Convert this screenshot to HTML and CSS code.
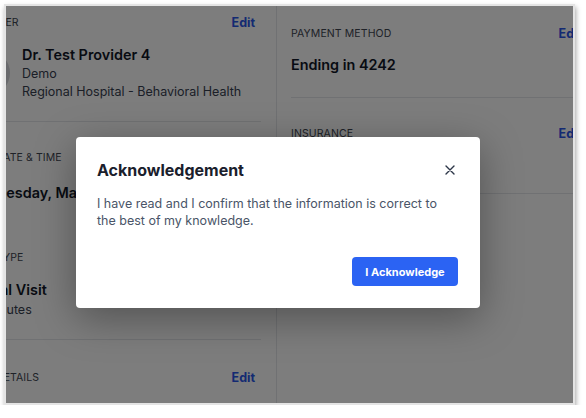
FILE: index.html
```html
<!DOCTYPE html>
<html lang="en">
<head>
<meta charset="utf-8">
<title>Acknowledgement</title>
<link rel="stylesheet" href="styles.css">
</head>
<body>
<div class="frame">
  <div class="page">
    <div class="col col-left">
      <section class="sec sec-provider">
        <div class="sec-head"><span class="label">Provider</span><a class="edit">Edit</a></div>
        <div class="provider">
          <div class="avatar"></div>
          <div class="provider-info">
            <div class="main">Dr. Test Provider 4</div>
            <div class="sub">Demo</div>
            <div class="sub">Regional Hospital - Behavioral Health</div>
          </div>
        </div>
      </section>
      <section class="sec sec-visit">
        <div class="sec-head"><span class="label">Visit Date &amp; Time</span></div>
        <div class="main date">Wednesday, May 15, 2024</div>
        <div class="sec-head type-head"><span class="label">Visit Type</span></div>
        <div class="main">Virtual Visit</div>
        <div class="sub duration">30 minutes</div>
      </section>
      <section class="sec sec-details">
        <div class="sec-head"><span class="label">Visit Details</span><a class="edit">Edit</a></div>
      </section>
    </div>
    <div class="col col-right">
      <section class="rsec rsec-pay">
        <div class="sec-head"><span class="label">Payment Method</span><a class="edit">Edit</a></div>
        <div class="main">Ending in 4242</div>
      </section>
      <section class="rsec rsec-ins">
        <div class="sec-head"><span class="label">Insurance</span><a class="edit">Edit</a></div>
        <div class="sub">Self pay</div>
      </section>
    </div>
  </div>
  <div class="overlay"></div>
  <div class="modal" role="dialog">
    <div class="modal-head">
      <h2 class="modal-title">Acknowledgement</h2>
      <button class="close" aria-label="Close">
        <svg width="10" height="10" viewBox="0 0 10 10"><path d="M1 1L9 9M9 1L1 9" stroke="#2d3748" stroke-width="1.4" stroke-linecap="round"/></svg>
      </button>
    </div>
    <p class="modal-body">I have read and I confirm that the information is correct to the best of my knowledge.</p>
    <div class="modal-foot"><button class="btn-primary">I Acknowledge</button></div>
  </div>
</div>
</body>
</html>
```

FILE: styles.css
```css
html, body {
  margin: 0;
  padding: 0;
  background: #ffffff;
}
body {
  font-family: Inter, "Noto Sans", sans-serif;
}
.frame {
  position: relative;
  margin: 4px 0 0 4px;
  width: 567px;
  height: 397px;
  border: 2px solid #e4e4e4;
  box-shadow: 1px 3px 5px rgba(0, 0, 0, 0.35);
  overflow: hidden;
  background: #ffffff;
}
.page {
  display: flex;
  height: 100%;
}
.col-left {
  flex: none;
  width: 311px;
  margin-left: -40px;
  border-right: 1px solid #e5e7eb;
  box-sizing: border-box;
  padding-right: 15px;
}
.col-right {
  flex: none;
  width: 297px;
  padding-left: 14px;
}
.sec-head {
  display: flex;
  justify-content: space-between;
  align-items: center;
  height: 16px;
}
.label {
  font-size: 10.5px;
  text-transform: uppercase;
  color: #3f4652;
  letter-spacing: 0.1px;
}
.edit {
  font-size: 12.5px;
  font-weight: 700;
  color: #2a56e8;
  margin-right: 6px;
}
.main {
  font-size: 14.4px;
  font-weight: 600;
  color: #111827;
  line-height: 20px;
}
.sub {
  font-size: 12.5px;
  color: #374151;
  line-height: 18px;
}
.sec {
  border-bottom: 1px solid #e5e7eb;
}
.sec-provider {
  padding-top: 8px;
  padding-bottom: 20px;
}
.provider {
  display: flex;
  align-items: center;
  gap: 12px;
  margin-top: 15px;
}
.avatar {
  width: 44px;
  height: 44px;
  border-radius: 50%;
  background: #d6d9de;
  flex: none;
}
.sec-visit {
  padding-top: 27px;
  padding-bottom: 20px;
}
.date {
  margin-top: 18px;
  white-space: nowrap;
}
.type-head {
  margin-top: 46px;
  margin-bottom: 15px;
}
.duration {
  margin-top: 1px;
}
.sec-details {
  padding-top: 29px;
  border-bottom: none;
}
.rsec {
  border-bottom: 1px solid #e5e7eb;
}
.rsec-pay {
  padding-top: 19px;
  padding-bottom: 22px;
}
.rsec-pay .main {
  margin-top: 14px;
}
.rsec-ins {
  padding-top: 27px;
  padding-bottom: 20px;
}
.rsec-ins .sub {
  margin-top: 14px;
}
.overlay {
  position: absolute;
  inset: 0;
  background: rgba(0, 0, 0, 0.51);
}
.modal {
  position: absolute;
  left: 70px;
  top: 131px;
  width: 404px;
  box-sizing: border-box;
  padding: 21px 22px 22px 21px;
  background: #ffffff;
  border-radius: 4px;
  box-shadow: 0 10px 40px rgba(0, 0, 0, 0.35);
}
.modal-head {
  display: flex;
  justify-content: space-between;
  align-items: center;
  height: 24px;
}
.modal-title {
  margin: 0;
  font-size: 16px;
  font-weight: 700;
  color: #1a202c;
  line-height: 24px;
}
.close {
  width: 16px;
  height: 16px;
  padding: 0;
  border: none;
  background: none;
  display: flex;
  align-items: center;
  justify-content: center;
}
.modal-body {
  margin: 13px 0 0;
  font-size: 12.5px;
  line-height: 17px;
  color: #4a5568;
}
.modal-foot {
  display: flex;
  justify-content: flex-end;
  margin-top: 28px;
}
.btn-primary {
  width: 106px;
  height: 29px;
  border: none;
  border-radius: 4px;
  background: #2b63f3;
  color: #ffffff;
  font-family: Inter, "Noto Sans", sans-serif;
  font-size: 11px;
  font-weight: 700;
}
```
